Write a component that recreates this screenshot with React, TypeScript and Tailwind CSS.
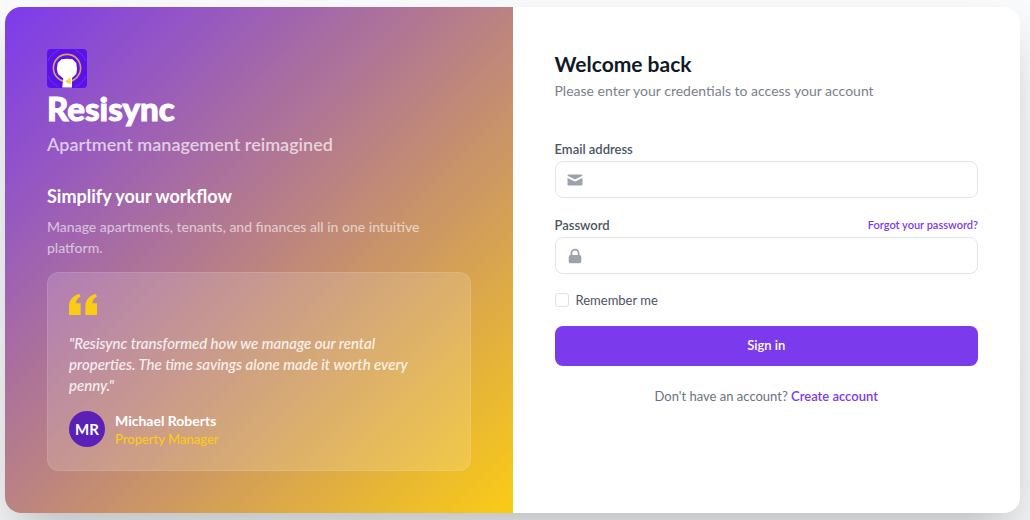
import React from "react";

function Logo() {
  return (
    <svg viewBox="0 0 40 39" className="block h-[39px] w-10" role="img" aria-label="Resisync logo">
      <rect width="40" height="39" rx="4" fill="#5b12ea" />
      <g fill="none" stroke="#7440ee" strokeWidth="0.7">
        <path d="M1 12A21 21 0 0 1 12 1M28 1a21 21 0 0 1 11 11M39 27a21 21 0 0 1-11 11M12 38A21 21 0 0 1 1 27" />
      </g>
      <circle cx="20" cy="19" r="13.6" fill="none" stroke="#d9a35c" strokeWidth="1.6" />
      <path d="M14.500 10.200Q20 9.300 25.500 10.200L29.300 14Q30.600 19.500 29.300 25L25 29L25 38.600h-9.800L16.300 29.500L11 25Q9 19.500 10.700 14z" fill="#fff" />
      <path d="M18.300 32.500l4.700-4.200 1.400 6.500c-2.500 0-4.800-.7-6.100-2.300z" fill="#fbd34d" />
    </svg>
  );
}

function QuoteMark() {
  return (
    <svg viewBox="0 0 24 18" className="block h-[21px] w-7 fill-[#facc15]" aria-hidden="true">
      <path d="M14.017 18V10.609C14.017 4.905 17.748 1.039 23 0L23.995 2.151C21.563 3.068 20 5.789 20 8H24V18H14.017ZM0 18V10.609C0 4.905 3.748 1.038 9 0L9.996 2.151C7.563 3.068 6 5.789 6 8H9.983V18H0Z" />
    </svg>
  );
}

function MailIcon() {
  return (
    <svg viewBox="0 0 18 18" className="size-[18px] fill-[#9ca3af]" aria-hidden="true">
      <path d="M1.500 4.800Q1.500 3.500 2.800 3.500H15.200Q16.500 3.500 16.500 4.800L9 8.400z" />
      <path d="M1.500 6.900L9 10.600 16.500 6.900V13.500Q16.500 14.600 15.300 14.600H2.700Q1.500 14.600 1.500 13.500z" />
    </svg>
  );
}

function LockIcon() {
  return (
    <svg viewBox="0 0 20 20" className="size-[18px] fill-[#9ca3af]" aria-hidden="true">
      <path fillRule="evenodd" clipRule="evenodd" d="M5 9V7a5 5 0 0110 0v2a2 2 0 012 2v5a2 2 0 01-2 2H5a2 2 0 01-2-2v-5a2 2 0 012-2zm8-2v2H7V7a3 3 0 016 0z" />
    </svg>
  );
}

type FieldProps = {
  id: string;
  type: string;
  icon: React.ReactNode;
};

function Field({ id, type, icon }: FieldProps) {
  return (
    <div className="flex h-[37px] items-center rounded-lg border border-[#e2e4e8] bg-white pl-2.5 focus-within:border-[#7c3aed]">
      {icon}
      <input id={id} name={id} type={type} className="h-full min-w-0 flex-1 rounded-lg bg-transparent px-2.5 text-[13px] outline-none" />
    </div>
  );
}

export default function App() {
  return (
    <div className="flex min-h-screen bg-linear-to-b from-[#f8fafc] to-[#f3f4f6] py-[7px] pr-2.5 pl-[5px] font-['Lato',sans-serif]">
      <main className="grid flex-1 grid-cols-2 overflow-hidden rounded-2xl bg-white shadow-2xl">
        <section className="bg-linear-to-br/srgb from-[#7c3aed] to-[#facc15] p-[42px] text-white">
          <Logo />
          <h1 className="text-[33px] leading-10 font-black [-webkit-text-stroke:1px_white]">Resisync</h1>
          <p className="mt-0.5 text-[18px] leading-7 font-semibold text-white/70">Apartment management reimagined</p>
          <h2 className="mt-6 text-[18px] leading-7 font-bold">Simplify your workflow</h2>
          <p className="mt-1.5 text-[14px] leading-[21px] font-medium text-white/60">
            Manage apartments, tenants, and finances all in one intuitive platform.
          </p>
          <figure className="mt-3.5 rounded-xl border border-white/10 bg-white/15 px-[21px] pt-[21px] pb-[22px]">
            <QuoteMark />
            <blockquote className="mt-[18px] pr-6 text-[15px] leading-[21px] font-medium text-white/85 italic">
              "Resisync transformed how we manage our rental properties. The time savings alone made it worth every penny."
            </blockquote>
            <figcaption className="mt-3.5 flex items-center gap-2.5">
              <span className="flex size-9 items-center justify-center rounded-full bg-[#5b21b6] text-[15px] font-bold">MR</span>
              <span className="flex flex-col pt-0.5">
                <span className="text-[14px] leading-[18px] font-bold">Michael Roberts</span>
                <span className="text-[13px] leading-[18px] font-medium text-[#facc15]">Property Manager</span>
              </span>
            </figcaption>
          </figure>
        </section>

        <section className="p-[42px]">
          <h2 className="text-[21px] leading-[30px] font-bold text-[#111827]">Welcome back</h2>
          <p className="mt-0.5 text-[14px] leading-5 text-[#7b818d]">Please enter your credentials to access your account</p>
          <form className="mt-[38px]" onSubmit={(event) => event.preventDefault()}>
            <label htmlFor="email" className="mb-0.5 block text-[13px] leading-5 font-semibold text-[#4b5563]">
              Email address
            </label>
            <Field id="email" type="email" icon={<MailIcon />} />
            <div className="mt-[17px] mb-0.5 flex items-center justify-between leading-5">
              <label htmlFor="password" className="text-[13px] font-semibold text-[#4b5563]">
                Password
              </label>
              <a href="#forgot" className="text-[11px] font-semibold text-[#7c3aed]">
                Forgot your password?
              </a>
            </div>
            <Field id="password" type="password" icon={<LockIcon />} />
            <div className="mt-4 flex h-5 items-center gap-[7px]">
              <input
                id="remember"
                type="checkbox"
                className="size-3.5 appearance-none rounded-[3px] border border-[#dfe1e5] bg-white checked:bg-[#7c3aed]"
              />
              <label htmlFor="remember" className="text-[13px] leading-5 text-[#4b5563]">
                Remember me
              </label>
            </div>
            <button type="submit" className="mt-4 h-10 w-full rounded-lg bg-[#7c3aed] text-[13px] font-semibold text-white">
              Sign in
            </button>
          </form>
          <p className="mt-5 text-center text-[13px] leading-5 text-[#6b7280]">
            Don't have an account?{" "}
            <a href="#create" className="font-semibold text-[#7c3aed]">
              Create account
            </a>
          </p>
        </section>
      </main>
    </div>
  );
}
